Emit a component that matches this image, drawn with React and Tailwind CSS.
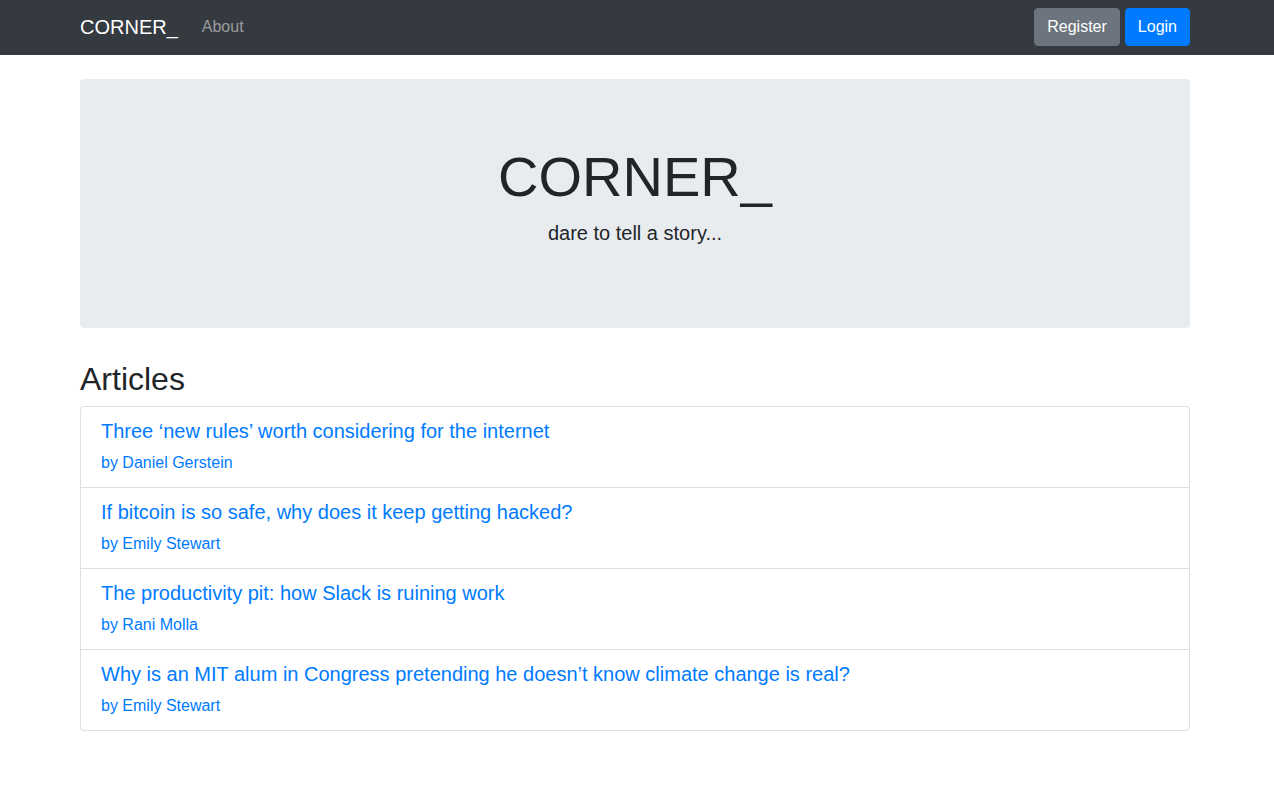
const articles = [
  { title: "Three ‘new rules’ worth considering for the internet", author: "Daniel Gerstein" },
  { title: "If bitcoin is so safe, why does it keep getting hacked?", author: "Emily Stewart" },
  { title: "The productivity pit: how Slack is ruining work", author: "Rani Molla" },
  { title: "Why is an MIT alum in Congress pretending he doesn’t know climate change is real?", author: "Emily Stewart" },
];

export default function App() {
  return (
    <div className="min-h-screen bg-white text-[#212529] font-['Liberation_Sans',Arial,sans-serif] text-base leading-6">
      <nav className="bg-[#343a40] h-[55px]">
        <div className="ml-[80px] w-[1110px] h-[54px] flex items-center justify-between">
          <div className="flex items-center -mt-px">
            <a href="#" className="text-white text-[20px] leading-[30px] mr-4">CORNER_</a>
            <a href="#" className="text-white/50 ml-[8px]">About</a>
          </div>
          <div className="flex items-center gap-[5px]">
            <button className="bg-[#6c757d] border border-[#6c757d] text-white rounded-[4px] px-3 h-[38px]">Register</button>
            <button className="bg-[#007bff] border border-[#007bff] text-white rounded-[4px] px-3 h-[38px]">Login</button>
          </div>
        </div>
      </nav>

      <main className="ml-[80px] w-[1110px] pt-6">
        <div className="bg-[#e9ecef] rounded-[4px] px-8 py-16 text-center">
          <h1 className="text-[56px] leading-[67px] font-light mb-2">CORNER_</h1>
          <p className="text-[20px] leading-[30px] mb-4">dare to tell a story...</p>
        </div>

        <h2 className="text-[32px] leading-[38px] mt-8 mb-2">Articles</h2>

        <div className="border border-black/[0.125] rounded-[4px]">
          {articles.map((a, i) => (
            <div key={i} className={"px-5 py-3 " + (i > 0 ? "border-t border-black/[0.125]" : "")}>
              <a href="#" className="block text-[#007bff] text-[20px] leading-6 mb-2">{a.title}</a>
              <a href="#" className="block text-[#007bff] leading-6">by {a.author}</a>
            </div>
          ))}
        </div>
      </main>
    </div>
  );
}
